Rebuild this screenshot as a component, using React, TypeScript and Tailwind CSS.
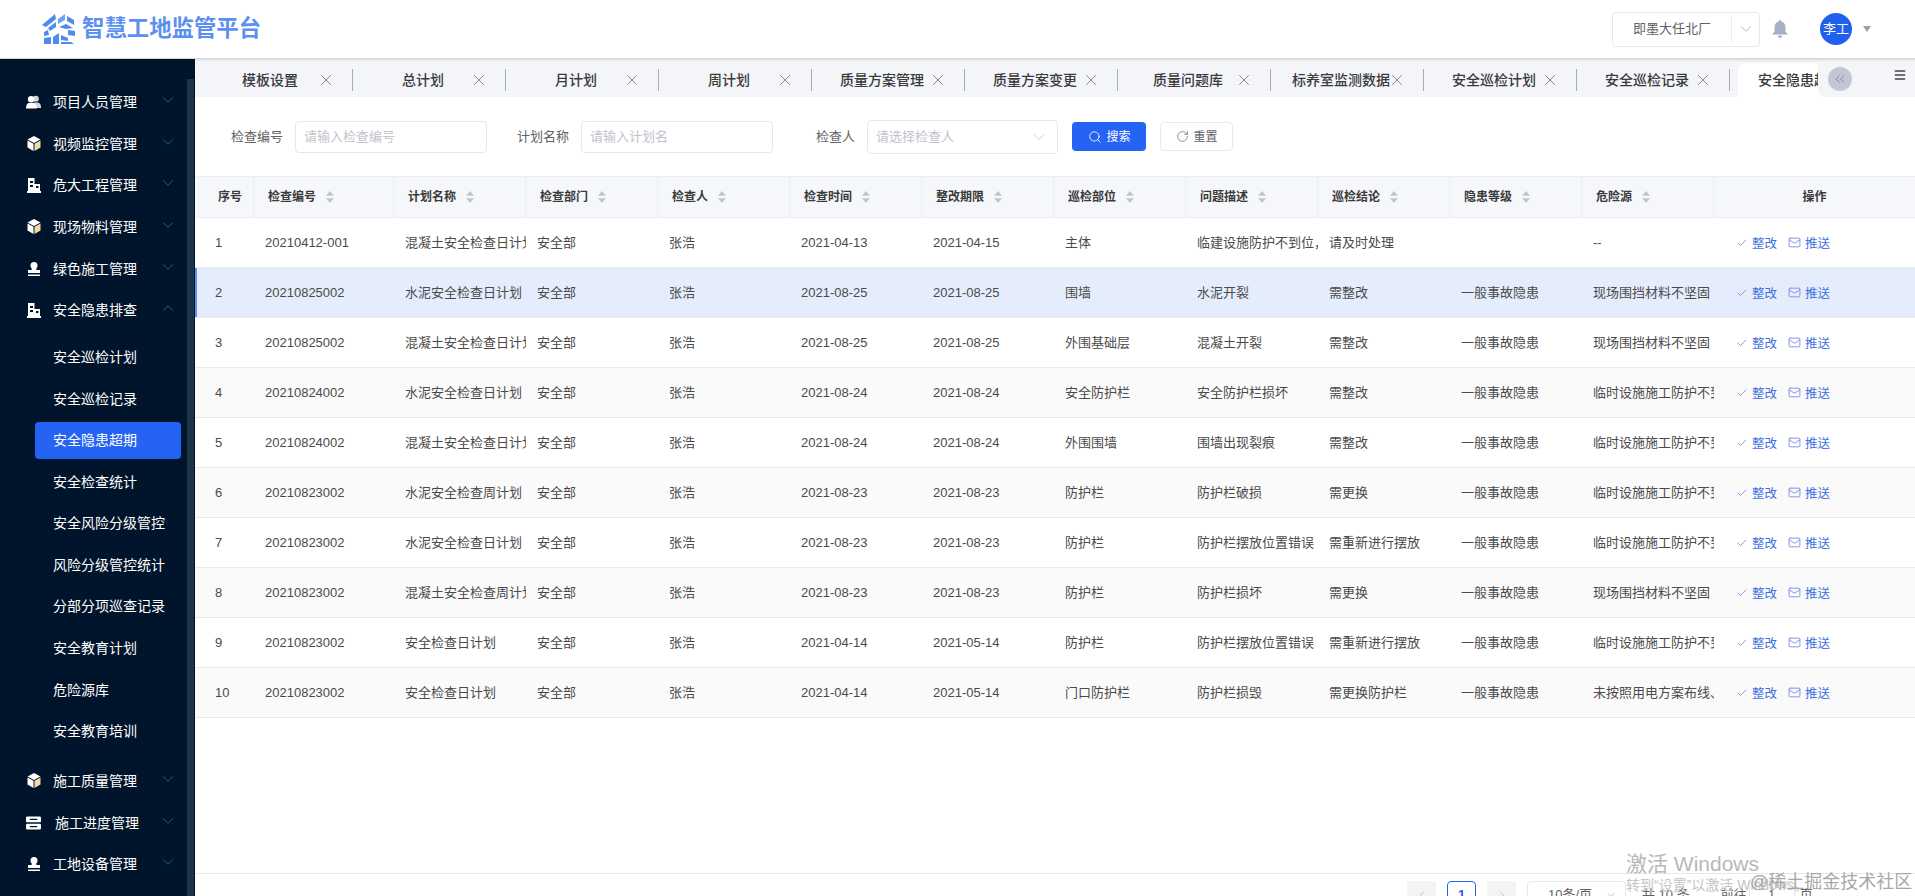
import { Check, ChevronDown, ChevronUp, ChevronLeft, ChevronRight, ChevronsLeft, Mail, Menu, RotateCw, Search, X } from 'lucide-react'

const rowGrid = 'grid grid-cols-[59px_140px_repeat(10,132px)_201px]'

const tabs = ['模板设置', '总计划', '月计划', '周计划', '质量方案管理', '质量方案变更', '质量问题库', '标养室监测数据', '安全巡检计划', '安全巡检记录']

const subMenus = ['安全巡检计划', '安全巡检记录', '安全隐患超期', '安全检查统计', '安全风险分级管控', '风险分级管控统计', '分部分项巡查记录', '安全教育计划', '危险源库', '安全教育培训']

const columns = ['检查编号', '计划名称', '检查部门', '检查人', '检查时间', '整改期限', '巡检部位', '问题描述', '巡检结论', '隐患等级', '危险源']

const fence = '临时设施施工防护不到位'
const soft = '现场围挡材料不坚固'
const general = '一般事故隐患'

const rows = [
  ['20210412-001', '混凝土安全检查日计划', '2021-04-13', '2021-04-15', '主体', '临建设施防护不到位，', '请及时处理', '', '--'],
  ['20210825002', '水泥安全检查日计划', '2021-08-25', '2021-08-25', '围墙', '水泥开裂', '需整改', general, soft],
  ['20210825002', '混凝土安全检查日计划', '2021-08-25', '2021-08-25', '外围基础层', '混凝土开裂', '需整改', general, soft],
  ['20210824002', '水泥安全检查日计划', '2021-08-24', '2021-08-24', '安全防护栏', '安全防护栏损坏', '需整改', general, fence],
  ['20210824002', '混凝土安全检查日计划', '2021-08-24', '2021-08-24', '外围围墙', '围墙出现裂痕', '需整改', general, fence],
  ['20210823002', '水泥安全检查周计划', '2021-08-23', '2021-08-23', '防护栏', '防护栏破损', '需更换', general, fence],
  ['20210823002', '水泥安全检查日计划', '2021-08-23', '2021-08-23', '防护栏', '防护栏摆放位置错误', '需重新进行摆放', general, fence],
  ['20210823002', '混凝土安全检查周计划', '2021-08-23', '2021-08-23', '防护栏', '防护栏损坏', '需更换', general, soft],
  ['20210823002', '安全检查日计划', '2021-04-14', '2021-05-14', '防护栏', '防护栏摆放位置错误', '需重新进行摆放', general, fence],
  ['20210823002', '安全检查日计划', '2021-04-14', '2021-05-14', '门口防护栏', '防护栏损毁', '需更换防护栏', general, '未按照用电方案布线、'],
]

function Logo() {
  return (
    <svg width="36" height="33" viewBox="0 0 36 33" fill="#4f8bef" className="shrink-0">
      <path d="M1 12 L14 1 L15 6 L5 14 Z" />
      <path d="M7 15 L15 9 L15 14 L9 18 Z" />
      <path d="M3 19 L7 17 L8 22 L3 23 Z" />
      <path d="M17 6 L24 1 L24 7 L17 11 Z" opacity="0.8" />
      <path d="M26 3 L33 7 L33 12 L26 8 Z" />
      <path d="M18 14 L25 11 L32 15 L25 16 Z" />
      <path d="M27 17 L34 18 L34 23 L27 22 Z" />
      <path d="M3 25 L10 24 L10 31 L3 31 Z" />
      <path d="M12 24 L18 20 L18 31 L12 31 Z" />
      <path d="M20 22 L27 25 L27 28 L20 27 Z" />
      <path d="M20 29 L30 29 L33 31 L20 31 Z" />
    </svg>
  )
}

function PeopleIcon() {
  return (
    <svg width="16" height="14" viewBox="0 0 16 14" fill="#fff">
      <circle cx="10.5" cy="3.5" r="3.2" fill="#d5d8dc" />
      <path d="M8 7.5 h5 q3 1 3 5 v1 H9 Z" fill="#d5d8dc" />
      <circle cx="5.5" cy="4" r="3.5" />
      <path d="M2.5 8 h6 q3 1.5 3 6 H0 q-.2-4.500 2.500-6 Z" />
    </svg>
  )
}

function CubeIcon() {
  return (
    <svg width="14" height="15" viewBox="0 0 14 15">
      <path d="M7 0 L13.500 3.500 L7 7 L.5 3.500 Z" fill="#fff" />
      <path d="M.5 4.500 L6.500 7.800 V15 L.5 11.500 Z" fill="#fff" />
      <path d="M13.500 4.500 L7.500 7.800 V15 L13.500 11.500 Z" fill="#f3d9a8" />
    </svg>
  )
}

function BuildingIcon() {
  return (
    <svg width="14" height="15" viewBox="0 0 14 15" fill="#fff">
      <path fillRule="evenodd" d="M1 0 H7.500 V6 H13 V13 H14 V15 H0 V13 H1 Z M3 3 V5 H6 V3 Z M3 7 V9 H6 V7 Z M9 8 V10 H11.500 V8 Z" />
    </svg>
  )
}

function StampIcon() {
  return (
    <svg width="14" height="14" viewBox="0 0 14 14" fill="#fff">
      <circle cx="7" cy="3.500" r="3.500" />
      <path d="M5 6 H9 L9.500 8 H13 V11 H1 V8 H4.500 Z" />
      <rect x="1" y="12.500" width="12" height="1.500" />
    </svg>
  )
}

function ServerIcon() {
  return (
    <svg width="16" height="14" viewBox="0 0 16 14" fill="#fff">
      <path fillRule="evenodd" d="M1.500 0 H14.500 Q16 0 16 1.500 V5 Q16 6.300 14.500 6.300 H1.500 Q0 6.300 0 5 V1.500 Q0 0 1.500 0 Z M4 2.500 V3.800 H12 V2.500 Z" />
      <path fillRule="evenodd" d="M1.500 7.700 H14.500 Q16 7.700 16 9 V12.500 Q16 14 14.500 14 H1.500 Q0 14 0 12.500 V9 Q0 7.700 1.500 7.700 Z M4 10.200 V11.500 H12 V10.200 Z" />
    </svg>
  )
}

function BellIcon() {
  return (
    <svg width="16" height="18" viewBox="0 0 16 18" fill="#a5b0c6">
      <path d="M8 0 Q9.200 0 9.300 1.500 Q13.500 2.500 13.500 7.500 V11.500 L16 14.500 H0 L2.500 11.500 V7.500 Q2.500 2.500 6.700 1.500 Q6.800 0 8 0 Z" />
      <path d="M5.800 15.500 H10.200 Q9.800 18 8 18 Q6.200 18 5.800 15.500 Z" />
    </svg>
  )
}

function SortCaret() {
  return (
    <svg width="8" height="12" viewBox="0 0 8 12" fill="#c0c4cc" className="ml-[10px] shrink-0">
      <path d="M4 0 L8 4.800 H0 Z" />
      <path d="M4 12 L8 7.200 H0 Z" />
    </svg>
  )
}

function MenuItem({ icon, label, open = false, textClass = 'ml-3' }: { icon: React.ReactNode; label: string; open?: boolean; textClass?: string }) {
  return (
    <div className="flex h-[41.7px] items-center pl-[26px] pr-[18px] text-sm text-white">
      <span className="flex w-[15px] shrink-0 justify-center">{icon}</span>
      <span className={textClass}>{label}</span>
      {open ? (
        <ChevronUp className="mb-1 ml-auto h-[18px] w-[18px] text-[#5a6b80]" strokeWidth={1} />
      ) : (
        <ChevronDown className="mb-1 ml-auto h-[18px] w-[18px] text-[#5a6b80]" strokeWidth={1} />
      )}
    </div>
  )
}

function Sidebar() {
  return (
    <aside className="relative h-full w-[195px] shrink-0 bg-[#00142b] pt-[22px]">
      <div className="absolute bottom-0 right-[1px] top-[20px] w-[7px] bg-[#1b3347]" />
      <MenuItem icon={<PeopleIcon />} label="项目人员管理" />
      <MenuItem icon={<CubeIcon />} label="视频监控管理" />
      <MenuItem icon={<BuildingIcon />} label="危大工程管理" />
      <MenuItem icon={<CubeIcon />} label="现场物料管理" />
      <MenuItem icon={<StampIcon />} label="绿色施工管理" />
      <MenuItem icon={<BuildingIcon />} label="安全隐患排查" open />
      <div className="pb-2 pt-[5px]">
        {subMenus.map((name) => (
          <div key={name} className="flex h-[41.6px] items-center">
            <div className={`ml-[35px] flex h-[37px] w-[146px] items-center rounded pl-[18px] text-sm text-white ${name === '安全隐患超期' ? 'bg-[#2563f5]' : ''}`}>
              {name}
            </div>
          </div>
        ))}
      </div>
      <MenuItem icon={<CubeIcon />} label="施工质量管理" />
      <MenuItem icon={<ServerIcon />} label="施工进度管理" textClass="ml-[14px]" />
      <MenuItem icon={<StampIcon />} label="工地设备管理" />
    </aside>
  )
}

function TabBar() {
  return (
    <div className="relative flex h-[38px] shrink-0 overflow-hidden bg-[#f3f5f8] pl-[5px] pt-1">
      {tabs.map((name) => (
        <div key={name} className="flex w-[153px] shrink-0 items-center pl-[11px] text-sm font-medium text-[#3a3a3a]">
          <span className="w-[118px] shrink-0 text-center">{name}</span>
          <X className="ml-[-12px] h-[18px] w-[18px] shrink-0 text-[#666]" strokeWidth={1} />
          <span className="ml-auto h-[22px] w-px bg-[#a9adb3]" />
        </div>
      ))}
      <div className="ml-[8px] flex w-[145px] shrink-0 items-center rounded-t-lg bg-white pl-[3px] text-sm font-medium text-[#3a3a3a]">
        <span className="w-[118px] shrink-0 whitespace-nowrap text-center">安全隐患超期</span>
      </div>
      <div className="absolute bottom-0 right-0 top-0 flex w-[97px] items-start rounded-bl-lg bg-[#f3f5f8] pl-[10px] pt-[8px]">
        <span className="flex h-6 w-6 items-center justify-center rounded-full bg-[#c3c7d3]">
          <ChevronsLeft className="h-4 w-4 text-[#7d8290]" strokeWidth={1.25} />
        </span>
        <Menu className="ml-[41px] mt-[1px] h-[14px] w-[14px] text-[#444]" strokeWidth={2.5} />
      </div>
    </div>
  )
}

function Filters() {
  return (
    <div className="flex h-[79px] shrink-0 items-center pl-[36px] text-[13px] text-[#606266]">
      <span>检查编号</span>
      <div className="ml-3 flex h-8 w-[192px] items-center rounded border border-[#e4e7ed] pl-2 text-[#c0c4cc]">请输入检查编号</div>
      <span className="ml-[30px]">计划名称</span>
      <div className="ml-3 flex h-8 w-[192px] items-center rounded border border-[#e4e7ed] pl-2 text-[#c0c4cc]">请输入计划名</div>
      <span className="ml-[43px]">检查人</span>
      <div className="ml-3 flex h-[34px] w-[191px] items-center justify-between rounded border border-[#e4e7ed] pl-2 pr-2 text-[#c0c4cc]">
        请选择检查人
        <ChevronDown className="h-5 w-5 text-[#c0c4cc]" strokeWidth={1} />
      </div>
      <div className="ml-[14px] flex h-[29px] w-[74px] items-center justify-center gap-[5px] rounded bg-[#2563f5] text-xs text-white">
        <Search className="h-[14px] w-[14px]" strokeWidth={1.5} />
        搜索
      </div>
      <div className="ml-[14px] flex h-[29px] w-[73px] items-center justify-center gap-[5px] rounded border border-[#e8eaee] text-xs text-[#606266]">
        <RotateCw className="h-[13px] w-[13px]" strokeWidth={1.25} />
        重置
      </div>
    </div>
  )
}

function DataTable() {
  return (
    <div className="min-h-0 flex-1 overflow-hidden">
      <div className={`${rowGrid} h-[42px] border-y border-[#ebeef5] bg-[#f5f7fa] text-xs font-bold text-[#3a3a3a]`}>
        <div className="flex items-center border-r border-[#ebeef5] pl-[23px]">序号</div>
        {columns.map((name) => (
          <div key={name} className="flex items-center border-r border-[#ebeef5] pl-[14px]">
            {name}
            <SortCaret />
          </div>
        ))}
        <div className="flex items-center justify-center">操作</div>
      </div>
      {rows.map((row, i) => (
        <div
          key={i}
          className={`${rowGrid} h-[50px] border-b border-[#e8eaee] text-[13px] text-[#4a4a4a] ${i === 1 ? 'bg-[#e5edfd]' : i % 2 === 1 ? 'bg-[#fafafa]' : 'bg-white'}`}
        >
          <div className={i === 1 ? 'flex items-center border-l-2 border-[#5f8ff5] pl-[18px]' : 'flex items-center pl-[20px]'}>{i + 1}</div>
          <Cell text={row[0]} />
          <Cell text={row[1]} />
          <Cell text="安全部" />
          <Cell text="张浩" />
          <Cell text={row[2]} />
          <Cell text={row[3]} />
          <Cell text={row[4]} />
          <Cell text={row[5]} />
          <Cell text={row[6]} />
          <Cell text={row[7]} />
          <Cell text={row[8]} />
          <div className="flex items-center pl-[22px] text-[12.5px] text-[#3d6fe0]">
            <Check className="h-3 w-3 text-[#6b7fe0]" strokeWidth={1.5} />
            <span className="ml-[4px] mt-[3px]">整改</span>
            <Mail className="ml-[11px] h-[13px] w-[13px] text-[#6b7fe0]" strokeWidth={1.5} />
            <span className="ml-[4px] mt-[3px]">推送</span>
          </div>
        </div>
      ))}
    </div>
  )
}

function Cell({ text }: { text: string }) {
  return <div className="flex items-center overflow-hidden whitespace-nowrap pl-[11px]">{text}</div>
}

function Pagination() {
  return (
    <div className="relative flex h-[23px] shrink-0 items-start border-t border-[#e4e7ed] pl-[1212px] pt-[7px] text-[13px] text-[#606266]">
      <span className="flex h-7 w-[29px] items-center justify-center bg-[#f4f4f5] text-[#c0c4cc]"><ChevronLeft className="h-3 w-3" /></span>
      <span className="ml-[11px] flex h-7 w-[29px] items-center justify-center rounded-sm border border-[#2563f5] font-bold text-[#2563f5]">1</span>
      <span className="ml-[11px] flex h-7 w-[29px] items-center justify-center bg-[#f4f4f5] text-[#c0c4cc]"><ChevronRight className="h-3 w-3" /></span>
      <span className="ml-[11px] flex h-7 w-[99px] items-center justify-between rounded border border-[#e4e7ed] pl-5 pr-2">
        10条/页
        <ChevronDown className="h-3 w-3 text-[#c0c4cc]" />
      </span>
      <span className="ml-4 mt-1">共 10 条</span>
      <span className="ml-[31px] mt-1">前往</span>
      <span className="ml-[2px] flex h-7 w-[46px] items-center justify-center rounded border border-[#e4e7ed]">1</span>
      <span className="ml-[5px] mt-1">页</span>
    </div>
  )
}

export default function App() {
  return (
    <div className="relative flex h-screen flex-col overflow-hidden bg-white [font-family:'Liberation_Sans','Noto_Sans_CJK_SC',sans-serif]">
      <header className="z-10 flex h-[59px] shrink-0 items-center border-b border-[#d5d7db] bg-white pl-[41px] shadow-[0_1px_2px_rgba(0,0,0,0.12)]">
        <Logo />
        <span className="ml-[5px] text-[22.4px] font-bold text-[#5b8ff0]">智慧工地监管平台</span>
        <div className="ml-auto flex h-[35px] w-[148px] items-center rounded border border-[#e4e7ed] text-[13px] text-[#606266]">
          <span className="w-[118px] pl-[20px]">即墨大任北厂</span>
          <span className="h-[26px] w-px bg-[#eceef2]" />
          <ChevronDown className="ml-[5px] h-[18px] w-[18px] text-[#9aa0a8]" strokeWidth={1} />
        </div>
        <span className="ml-3 flex"><BellIcon /></span>
        <span className="ml-[32px] flex h-8 w-8 items-center justify-center rounded-full bg-[#2060ee] text-[13px] text-white">李工</span>
        <span className="ml-[11px] mr-[44px] h-0 w-0 border-x-[4px] border-t-[6px] border-x-transparent border-t-[#9aa0a8]" />
      </header>
      <div className="flex min-h-0 flex-1">
        <Sidebar />
        <main className="flex min-w-0 flex-1 flex-col">
          <TabBar />
          <Filters />
          <DataTable />
          <Pagination />
        </main>
      </div>
      <div className="absolute left-[1626px] top-[848px] text-[21px] text-[#b8b8b8]">激活 Windows</div>
      <div className="absolute left-[1626px] top-[875px] text-sm text-[#c4c4c4]">转到“设置”以激活 Windows。</div>
      <div className="absolute left-[1750px] top-[868px] text-lg text-[#a8a8a8]">@稀土掘金技术社区</div>
    </div>
  )
}
